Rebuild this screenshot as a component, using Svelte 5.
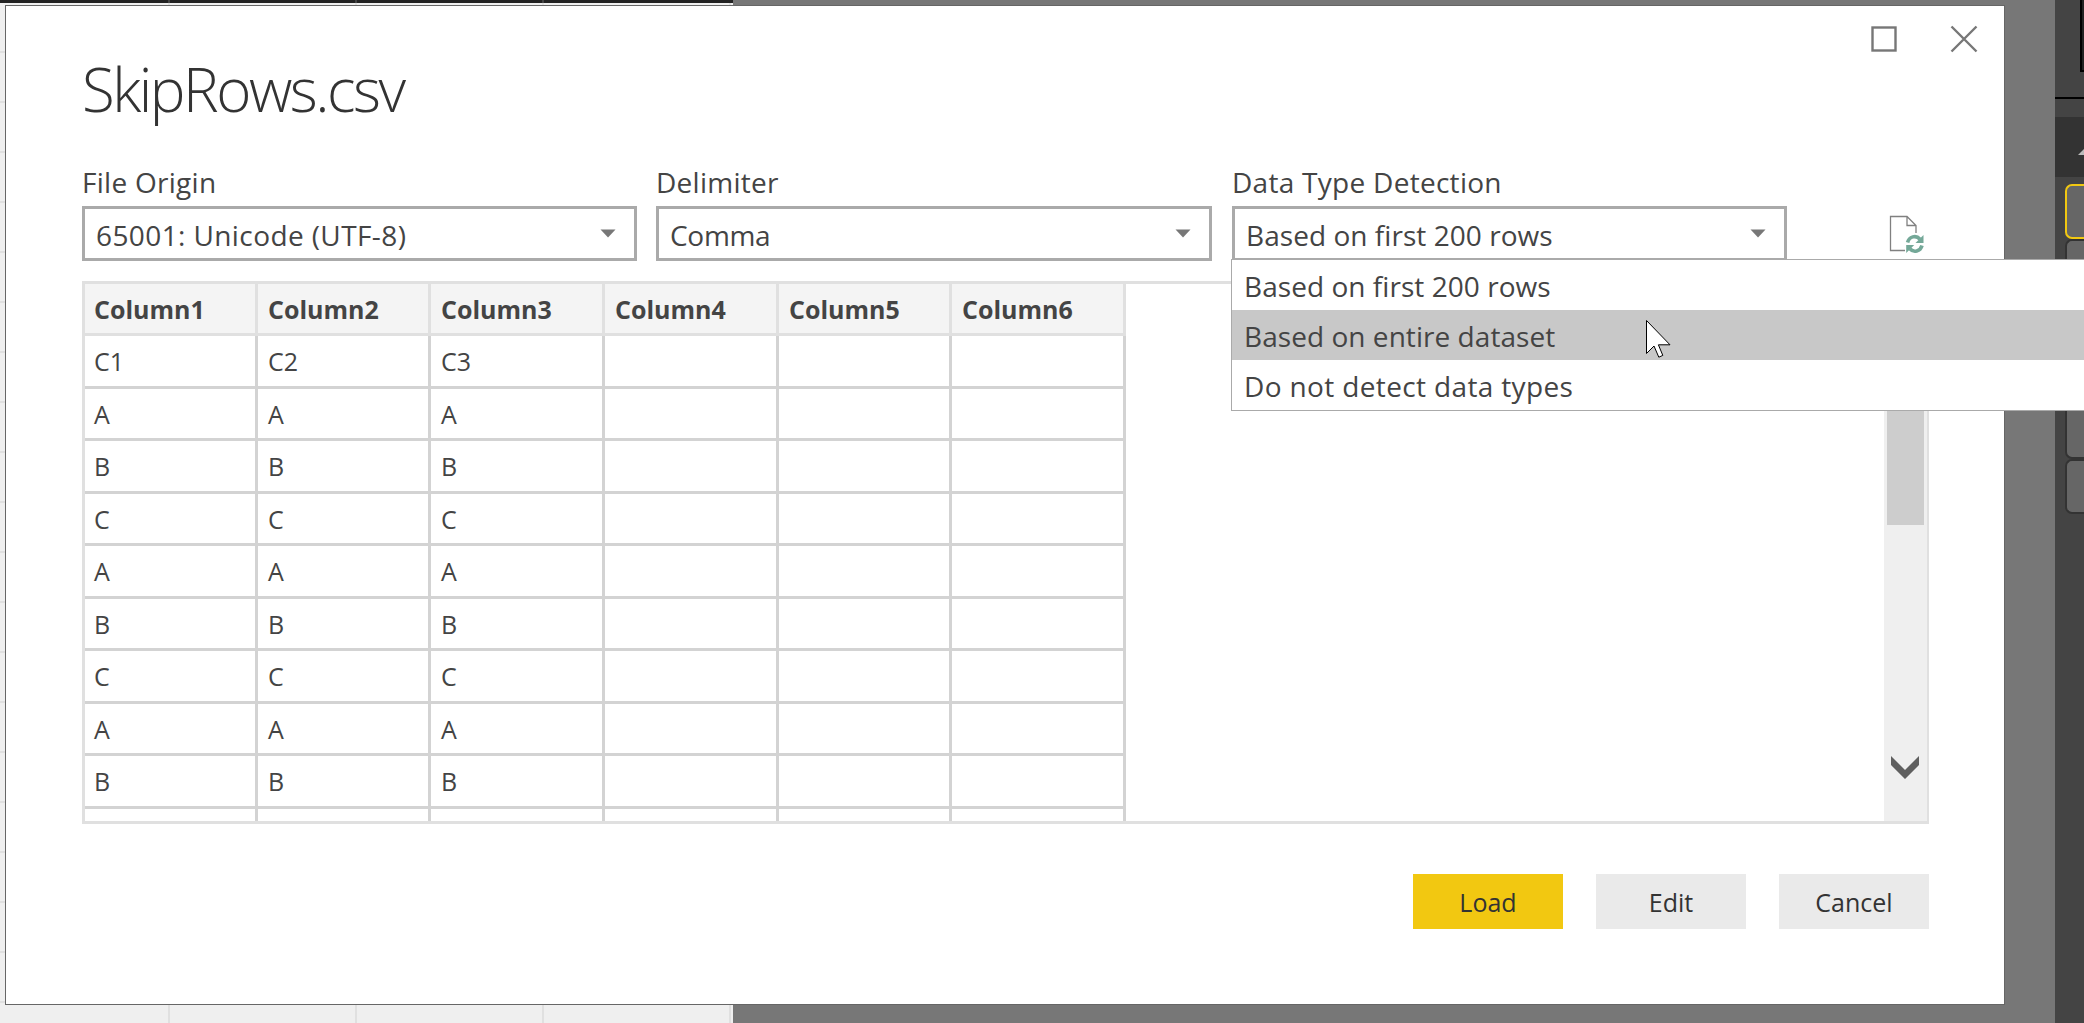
<script lang="ts">
  const columns = ['Column1', 'Column2', 'Column3', 'Column4', 'Column5', 'Column6']
  const firstCells = ['A', 'B', 'C', 'A', 'B', 'C', 'A', 'B']
  const rows: string[][] = [
    ['C1', 'C2', 'C3', '', '', ''],
    ...firstCells.map((v) => [v, v, v, '', '', '']),
    ['', '', '', '', '', ''],
  ]

  const fields = [
    { label: 'File Origin', value: '65001: Unicode (UTF-8)', id: 'origin' },
    { label: 'Delimiter', value: 'Comma', id: 'delimiter' },
    { label: 'Data Type Detection', value: 'Based on first 200 rows', id: 'detection' },
  ]

  const detectionOptions = [
    'Based on first 200 rows',
    'Based on entire dataset',
    'Do not detect data types',
  ]

  const tiles = [0, 1, 2, 3, 4, 5]

  let highlighted = $state(1)
</script>

<div class="app">
  <div class="canvas">
    <div class="ribbon"></div>
    <div class="grid"></div>
  </div>
  <div class="pane">
    <div class="pane-top"><div class="pane-box"></div></div>
    <div class="pane-section">
      <svg width="6" height="6" viewBox="0 0 6 6"><path d="M0 6L6 0V6Z" fill="#bbb" /></svg>
    </div>
    <div class="tiles">
      {#each tiles as tile}
        <div class="tile" class:active={tile === 0}></div>
      {/each}
    </div>
  </div>

  <div class="dialog">
    <div class="window-buttons">
      <button aria-label="Maximize">
        <svg width="28" height="28" viewBox="0 0 28 28"><rect x="2.5" y="2.5" width="23" height="23" fill="none" stroke="#777" stroke-width="2.4" /></svg>
      </button>
      <button aria-label="Close">
        <svg width="28" height="28" viewBox="0 0 28 28"><path d="M1.5 1.5L26.5 26.5M26.5 1.5L1.5 26.5" stroke="#777" stroke-width="2.4" /></svg>
      </button>
    </div>

    <h1>SkipRows.csv</h1>

    <div class="fields">
      {#each fields as field}
        <div class="field {field.id}">
          <span class="label">{field.label}</span>
          <div class="select">
            <span class="value">{field.value}</span>
            <svg width="16" height="9" viewBox="0 0 16 9"><path d="M0.5 0.5H15.5L8 8.5Z" fill="#777" /></svg>
          </div>
        </div>
      {/each}
      <button class="refresh" aria-label="Refresh">
        <svg width="36" height="40" viewBox="0 0 36 40">
          <path d="M17 35.5H2.5V1.5H19L28 10.5V18M19 1.5V10.5H28" fill="none" stroke="#808080" stroke-width="1.3" />
          <g fill="none" stroke="#74a898" stroke-width="3.6">
            <path d="M19.6 27.5C21 21.5 28 19.6 32 24.2" />
            <path d="M34 30.5C32.4 36.5 25.6 38 21.8 33.8" />
          </g>
          <path d="M35.5 20V28H27.5ZM18.2 38V30H26.2Z" fill="#74a898" />
        </svg>
      </button>
    </div>

    <div class="preview">
      <div class="table">
        {#each columns as column}
          <div class="cell head">{column}</div>
        {/each}
        {#each rows as row}
          {#each row as value}
            <div class="cell">{value}</div>
          {/each}
        {/each}
      </div>
      <div class="scrollbar">
        <div class="thumb"></div>
        <svg width="28" height="23" viewBox="0 0 28 23"><path d="M0 0L14 14L28 0V9L14 23L0 9Z" fill="#5f5f5f" /></svg>
      </div>
    </div>

    <div class="actions">
      <button class="primary">Load</button>
      <button>Edit</button>
      <button>Cancel</button>
    </div>
  </div>

  <div class="menu">
    {#each detectionOptions as option, i}
      <div class="option" class:highlighted={i === highlighted}>{option}</div>
    {/each}
  </div>

  <svg class="cursor" width="26" height="40" viewBox="0 0 26 40">
    <path d="M0.5 0.5V33.5L8 26L12.8 37.2L16.8 35.4L12.4 24.8H24Z" fill="#fff" stroke="#000" />
  </svg>
</div>

<style>
  :global(body) {
    overflow: hidden;
  }

  .app {
    position: relative;
    display: flex;
    justify-content: space-between;
    width: 2084px;
    height: 1023px;
    overflow: hidden;
    background: #777;
    color: #444;
    font-family: 'Open Sans', 'Noto Sans', sans-serif;
  }

  button {
    border: 0;
    padding: 0;
    background: none;
    font: inherit;
    color: inherit;
  }

  svg {
    display: block;
    flex: none;
  }

  .canvas {
    display: flex;
    flex-direction: column;
    width: 733px;
  }
  .ribbon {
    height: 3px;
    background: repeating-linear-gradient(90deg, #222 0 185px, #444 185px 187px) -17px 0;
  }
  .grid {
    flex: 1;
    background:
      repeating-linear-gradient(90deg, transparent 0 185px, #e0e0e0 185px 187px) -17px 0 / 935px 100%,
      repeating-linear-gradient(180deg, transparent 0 48px, #e0e0e0 48px 50px),
      #efefef;
  }

  .pane {
    display: flex;
    flex-direction: column;
    width: 29px;
    background: #444;
  }
  .pane-top {
    display: flex;
    justify-content: flex-end;
    height: 97px;
    border-bottom: 2px solid #000;
  }
  .pane-box {
    width: 2px;
    height: 70px;
    border: solid #000;
    border-width: 0 0 2px 2px;
    background: #222;
  }
  .pane-section {
    display: flex;
    justify-content: flex-end;
    align-items: center;
    height: 60px;
    margin-top: 18px;
    padding-top: 10px;
    box-sizing: border-box;
    background: #333;
  }
  .tiles {
    display: flex;
    flex-direction: column;
    padding: 7px 0 0 10px;
  }
  .tile {
    box-sizing: border-box;
    height: 55px;
    border: 2px solid #333;
    border-right: 0;
    border-radius: 7px 0 0 7px;
    background: #666;
  }
  .tile.active {
    border-color: #f2c811;
  }

  .dialog {
    position: absolute;
    left: 5px;
    top: 5px;
    display: flex;
    flex-direction: column;
    box-sizing: border-box;
    width: 2000px;
    height: 1000px;
    border: 1px solid #666;
    padding: 19px 75px 75px 76px;
    background: #fff;
  }

  .window-buttons {
    display: flex;
    justify-content: flex-end;
    gap: 52px;
    height: 28px;
    margin-right: -49px;
  }

  h1 {
    margin: 0;
    height: 82px;
    line-height: 73px;
    font-size: 60px;
    font-weight: 300;
    letter-spacing: -2.5px;
    color: #333;
  }

  .fields {
    display: flex;
    gap: 20px;
    margin-top: 28px;
  }
  .field {
    width: 555px;
  }
  .label {
    display: block;
    height: 43px;
    line-height: 38px;
    font-size: 28px;
    letter-spacing: 0.28px;
  }
  .select {
    display: flex;
    align-items: center;
    justify-content: space-between;
    box-sizing: border-box;
    height: 55px;
    padding: 0 18px 0 11px;
    border: 3px solid #aaa;
    font-size: 28px;
    letter-spacing: 0.05px;
  }
  .value {
    padding-top: 2px;
  }
  .origin .value {
    letter-spacing: 0.4px;
  }
  .delimiter {
    width: 556px;
    margin-left: -1px;
  }
  .delimiter .value {
    letter-spacing: -0.3px;
  }
  .refresh {
    align-self: flex-end;
    margin: 0 0 6px 81px;
  }

  .preview {
    display: flex;
    justify-content: space-between;
    box-sizing: border-box;
    height: 543px;
    margin-top: 20px;
    border: 3px solid #e0e0e0;
    border-right-width: 2px;
    overflow: hidden;
  }
  .table {
    display: grid;
    grid-template-columns: 173px 173px 174px 174px 173px 174px;
    grid-template-rows: 52px;
    grid-auto-rows: 52.5px;
  }
  .cell {
    box-sizing: border-box;
    padding-left: 10px;
    border: solid #d3d3d3;
    border-width: 0 3px 3px 0;
    font-size: 25px;
    line-height: 50px;
  }
  .cell:nth-child(6n + 1) {
    padding-left: 9px;
  }
  .cell.head {
    border-color: #e0e0e0;
    background: #f4f4f4;
    font-weight: 700;
  }

  .scrollbar {
    display: flex;
    flex-direction: column;
    align-items: flex-start;
    justify-content: space-between;
    box-sizing: border-box;
    width: 43px;
    padding-bottom: 42px;
    background: #efefef;
  }
  .scrollbar svg {
    margin-left: 7px;
  }
  .thumb {
    width: 37px;
    height: 241px;
    margin-left: 3px;
    background: #cdcdcd;
  }

  .actions {
    display: flex;
    justify-content: flex-end;
    gap: 33px;
    margin-top: 50px;
  }
  .actions button {
    width: 150px;
    height: 55px;
    background: #eaeaea;
    color: #333;
    font-size: 25px;
  }
  .actions .primary {
    background: #f2c811;
  }

  .menu {
    position: absolute;
    left: 1231px;
    top: 259px;
    width: 870px;
    border: 1px solid #aaa;
    background: #fff;
  }
  .option {
    height: 50px;
    padding-left: 12px;
    line-height: 52px;
    font-size: 28px;
    letter-spacing: 0.05px;
  }
  .option:last-child {
    letter-spacing: 0.36px;
  }
  .option.highlighted {
    background: #c8c8c8;
  }

  .cursor {
    position: absolute;
    left: 1646px;
    top: 320px;
  }
</style>
